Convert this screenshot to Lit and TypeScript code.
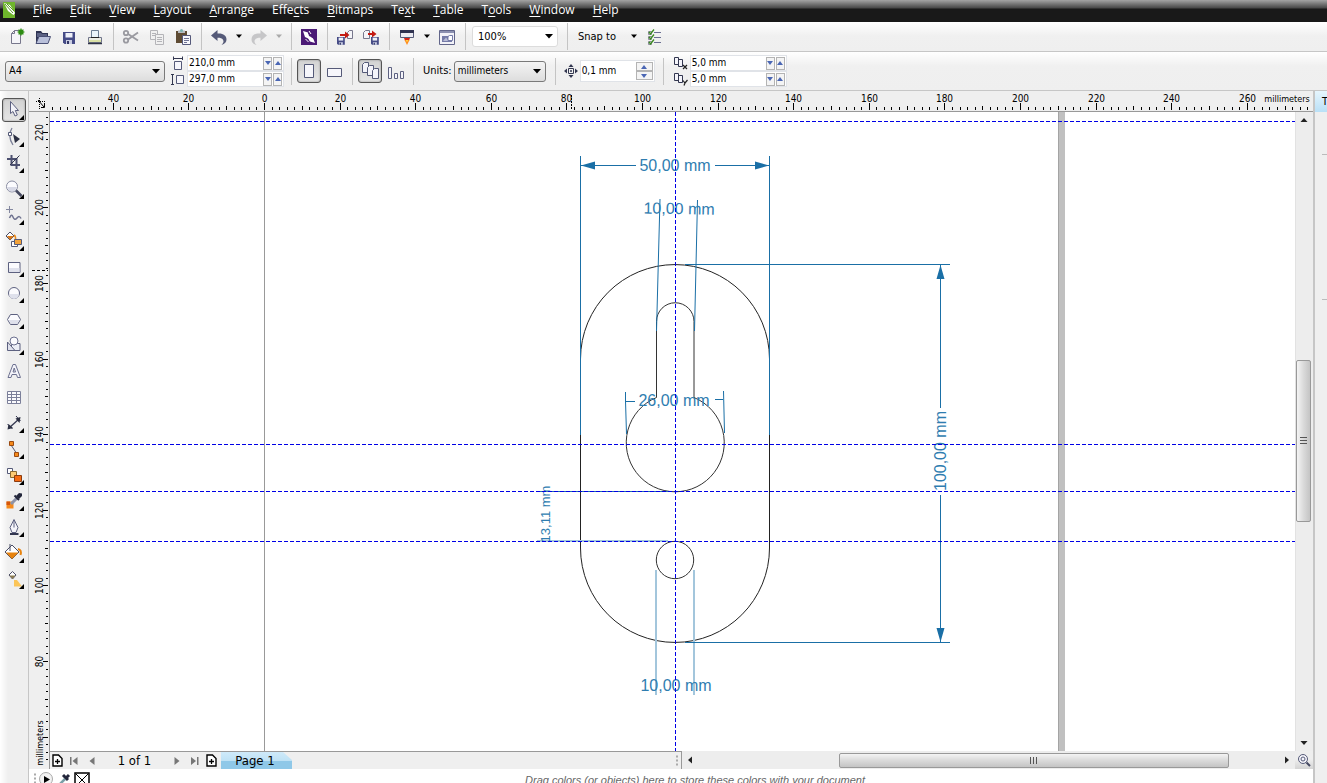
import { LitElement, html, svg, css, nothing, TemplateResult } from "lit";
import { customElement } from "lit/decorators.js";
import { classMap } from "lit/directives/class-map.js";

type Art = TemplateResult<2>;

const PX_PER_MM = 3.78;

const glyph = (art: Art, size = 16) =>
  html`<svg class="glyph" width=${size} height=${size} viewBox="0 0 ${size} ${size}" aria-hidden="true">${art}</svg>`;

/* ---------- standard toolbar icons, 18 x 18 ---------- */
const floppy = (x: number, y: number, s = 1) => svg`<g transform="translate(${x} ${y}) scale(${s})">
  <path d="M0 0H12V12H1.5L0 10.5Z" fill="#454b86"/><path d="M2.5 1H9.5V5.5H2.5Z" fill="#eef0f8"/>
  <path d="M3 8H9V12H3Z" fill="#c9cde2"/><path d="M4 9H6V12H4Z" fill="#333866"/></g>`;

const std: Record<string, Art> = {
  new: svg`<path d="M3.5 5.500L6.500 2.500H12.500V15.500H3.500Z" fill="#f4f4f8" stroke="#77778c"/><path d="M3.500 5.500H6.500V2.500" fill="none" stroke="#77778c"/>
    <circle cx="13" cy="4" r="2.600" fill="#37a018"/><path d="M13 .5V7.500M9.500 4H16.500M10.600 1.600L15.400 6.400M15.400 1.600L10.600 6.400" stroke="#2d8a12" stroke-width="1.200"/>`,
  open: svg`<path d="M2 15V3H7L8.500 5H14V8" fill="#2f3453"/><path d="M3 5H7L8 6H13V9H3Z" fill="#5c6284"/><path d="M2 15.500L5 8.500H16.500L14 15.500Z" fill="#b9c0da" stroke="#4a5075"/>`,
  save: floppy(3, 4),
  print: svg`<path d="M5.500 9V2.500H12.500V9" fill="#eaf4fa" stroke="#6d7f94"/><path d="M2.500 9.500H15.500V14.500H2.500Z" fill="#eceee6" stroke="#70758a"/><path d="M5 9.500H13" stroke="#222"/><path d="M3 12H15V14H3Z" fill="#d9e0a6"/><path d="M2 15.500H16" stroke="#2e3246" stroke-width="1.500"/>`,
  cut: svg`<g fill="none" stroke="#9a9aa0" stroke-width="1.800"><circle cx="4" cy="5" r="2.200"/><circle cx="4" cy="12.500" r="2.200"/><path d="M6 6L16 12.500M6 11.500L16 4.500"/></g>`,
  copy: svg`<g fill="#f0f0f0" stroke="#b4b4b8"><path d="M2.500 2.500H9.500V11.500H2.500Z"/><path d="M4 5.500H8M4 7.500H8" /><path d="M7.500 6.500H15.500V16.500H7.500Z"/><path d="M9 9.500H14M9 11.500H14M9 13.500H14"/></g>`,
  paste: svg`<path d="M2 3H13V15H2Z" fill="#5f4c34"/><path d="M4 2.500H11V5H4Z" fill="#b8bcc0"/><circle cx="7.500" cy="2.500" r="1.500" fill="#7ab3b0"/><path d="M8.500 7.500H16.500V16.500H8.500Z" fill="#f7f7fb" stroke="#55597a"/><path d="M10 10.500H15M10 12.500H15M10 14.500H13" stroke="#6e7294"/>`,
  undo: svg`<path d="M1 7.500L7.500 2V5.500C13 5 16.500 7.500 16.500 11.500C16.500 14 15 16 11.500 17C13.500 15 14 13.500 13 11.800C12 10.200 10.500 9.800 7.500 9.800V13Z" fill="#555a78"/>`,
  redo: svg`<path d="M17 7.500L10.500 2V5.500C5 5 1.500 7.500 1.500 11.500C1.500 14 3 16 6.500 17C4.500 15 4 13.500 5 11.800C6 10.200 7.500 9.800 10.500 9.800V13Z" fill="#c6c6c8"/>`,
  connect: svg`<path d="M1 1H17V17H1Z" fill="#4b1a76"/><path d="M3 3L8 4.500L9 8L13 10L15 15L10 13.500L8 10.500L5 9Z" fill="#fff"/><path d="M8 5L11 7M6 10L9 12.500M11.500 9L14 10.500" stroke="#4b1a76"/><path d="M9 3L11 6M5.500 11L8.500 14" stroke="#fff"/>`,
  import: svg`${floppy(1, 9, 0.65)}<path d="M11.500 10.500V4.500L13.500 2.500H16.500V10.500Z" fill="#f4f4f8" stroke="#77778c"/><path d="M4 6H9V3.500L13.500 7L9 10.500V8H4Z" fill="#c41a12"/>`,
  export: svg`<path d="M1.500 10.500V4.500L3.500 2.500H7.500V10.500Z" fill="#f4f4f8" stroke="#77778c"/><path d="M6 5H10V2.500L14.500 6L10 9.500V7H6Z" fill="#c41a12"/>${floppy(9, 9, 0.65)}`,
  launcher: svg`<path d="M2.500 2.500H15.500V9.500H2.500Z" fill="#ececf2" stroke="#555a78"/><path d="M2 2H16V5H2Z" fill="#2f3250"/><path d="M6 10H12L11 12.500H7Z" fill="#d82414"/><path d="M6.500 12H11.500L9 17Z" fill="#ff8a1c"/><path d="M8 12H10L9 14.500Z" fill="#ffe14a"/>`,
  welcome: svg`<path d="M1.500 2.500H16.500V16.500H1.500Z" fill="#f2f2f8" stroke="#62668a"/><path d="M2 3H16V5H2Z" fill="#8c90b0"/><path d="M4 8H14V14H4Z" fill="#757ba8"/><path d="M5 13L8 9.500L10 12L13 9V13Z" fill="#b9bdd6"/><path d="M10 10.500V8.500L11.500 7.500H14.500V12.500H10Z" fill="#fff" stroke="#757ba8"/>`,
  options: svg`<g stroke="#6b6f92" fill="none"><path d="M9 4.500H16M9 9.500H16M9 14.500H16"/><path d="M3.500 3.500H6.500V6.500H3.500ZM3.500 8.500H6.500V11.500H3.500ZM3.500 13.500H6.500V16.500H3.500Z" stroke="#8a8c98"/></g>
    <path d="M4 4L5.500 6L9 1.500M4 9L5.500 11L9 6.500M4 14L5.500 16L9 11.500" stroke="#3b8a20" stroke-width="1.300" fill="none"/>`,
  portrait: svg`<path d="M4.500 2.500H13.500V15.500H4.500Z" fill="#f6f6fb" stroke="#555a78"/>`,
  landscape: svg`<path d="M1.500 6.500H15.500V14.500H1.500Z" fill="#f6f6fb" stroke="#555a78"/>`,
  allPages: svg`<g fill="#f4f4fa" stroke="#555a78"><path d="M1.500 2.500L3.500 .5H7.500V10.500H1.500Z"/><path d="M6.500 5.500L8.500 3.500H12.500V13.500H6.500Z"/><path d="M11.500 8.500L13.500 6.500H17.500V16.500H11.500Z"/></g>`,
  currentPage: svg`<g fill="#f4f4fa" stroke="#5d6180"><path d="M1.500 5.500H4.500V16.500H1.500Z"/><path d="M7.500 11.500H10.500V16.500H7.500Z"/><path d="M13.500 9.500H16.500V16.500H13.500Z"/></g>`,
};

/* ---------- property bar marks ---------- */
const marks: Record<string, Art> = {
  width: svg`<path d="M3.500 5.500H10.500V13.500H3.500Z" fill="#f6f6fb" stroke="#555a78"/><path d="M2.500 .5V4M11.500 .5V4M3 2.500H11" stroke="#333750" fill="none"/>`,
  height: svg`<path d="M5.500 3.500H12.500V11.500H5.500Z" fill="#f6f6fb" stroke="#555a78"/><path d="M0 2.500H3M0 12.500H3M1.500 2V12" stroke="#333750" fill="none"/>`,
  nudge: svg`<path d="M4.500 4.500H9.500V9.500H4.500Z" fill="none" stroke="#333750"/><circle cx="7" cy="7" r="1" fill="#333750"/><path d="M7 0L9.500 3H4.500ZM7 14L4.500 11H9.500ZM0 7L3 4.500V9.500ZM14 7L11 9.500V4.500Z" fill="#333750"/>`,
  dupX: svg`<path d="M.5 1.500H4.500V8.500H.5ZM4.500 3.500H8.500V10.500H4.500Z" fill="#f4f4fa" stroke="#333750"/><path d="M9 9L13 13M13 9L9 13" stroke="#222" stroke-width="1.200"/>`,
  dupY: svg`<path d="M.5 1.500H4.500V8.500H.5ZM4.500 3.500H8.500V10.500H4.500Z" fill="#f4f4fa" stroke="#333750"/><path d="M9 8.500L11 11L13.500 8M11 11L10 13.500" stroke="#222" stroke-width="1.200" fill="none"/>`,
};

/* ---------- toolbox icons, 24 x 24 ---------- */
const flyout = svg`<path d="M22 17V22H17Z" fill="#000"/>`;
const bucket = (body: string, paint: string) => svg`<path d="M10 4L17 11L10 18L3 11Z" fill=${body} stroke="#4a4e66"/><path d="M4 11.500H16.500L10 18Z" fill=${paint}/><path d="M8 3V10" stroke="#4a4e66"/>`;

const tools: [string, Art, boolean][] = [
  ["Pick", svg`<path d="M8.500 3.500V15.500L11 13.500L13 18L15.300 17L13.300 12.500H16.500Z" fill="#f2f2f8" stroke="#5d6180"/>`, true],
  ["Shape", svg`<path d="M10 3Q5 11 11 20" fill="none" stroke="#7c8098" stroke-width="1.300"/><path d="M6.500 7.500H9.500V10.500H6.500Z" fill="#fff" stroke="#555a78"/><path d="M11 9L18 14L13 18Z" fill="#2b2f42"/>`, true],
  ["Crop", svg`<path d="M5 8H14.500V18M9.500 4V14H18" fill="none" stroke="#4c5070" stroke-width="2"/><path d="M17.500 4.500L8 14" stroke="#333750"/>`, true],
  ["Zoom", svg`<circle cx="10" cy="9.500" r="5.500" fill="#fbfbfe" stroke="#8a8da2"/><path d="M5.500 10H14.500A4.500 4.500 0 0 1 5.500 10Z" fill="#d7d9e6"/><path d="M14 13.500L19.500 19" stroke="#454960" stroke-width="2.600"/>`, true],
  ["Freehand", svg`<path d="M7.500 3V10M4 6.500H11" stroke="#8488a0"/><path d="M7.500 15Q9.500 10 11 14T15 15T19 15.500" fill="none" stroke="#6f7390" stroke-width="1.500"/>`, true],
  ["Smart Fill", svg`<path d="M8 3L12 7L8 11L4 7Z" fill="#fff" stroke="#4a4e66"/><path d="M5 7H12L8 11Z" fill="#d9791a"/><path d="M12 6Q14 7 13.500 11" stroke="#e98a1c" stroke-width="1.500" fill="none"/><path d="M9.500 12.500H15.500V17.500H9.500Z" fill="#fff" stroke="#555a78"/><path d="M12.500 10.500H19.500V15.500H12.500Z" fill="#f2a23a" stroke="#555a78"/>`, true],
  ["Rectangle", svg`<path d="M6.500 7.500H18V17.500H6.500Z" fill="#fbfbfe" stroke="#5d6180"/><path d="M7 13H17.500V17H7Z" fill="#dfe1ec"/>`, true],
  ["Ellipse", svg`<circle cx="12" cy="12" r="5.500" fill="#fbfbfe" stroke="#5d6180"/><path d="M7 13H17A5 5 0 0 1 7 13Z" fill="#dfe1ec"/>`, true],
  ["Polygon", svg`<path d="M5.500 12.500L8.500 7.500H15.500L18.500 12.500L15.500 17.500H8.500Z" fill="#fbfbfe" stroke="#5d6180"/><path d="M6.500 13H17.500L15 17H9Z" fill="#dfe1ec"/>`, true],
  ["Basic Shapes", svg`<path d="M9.500 10.500H18V17.500H9.500Z" fill="#eceef6" stroke="#5d6180"/><circle cx="12" cy="8" r="4" fill="#fbfbfe" stroke="#6d7190"/><path d="M5.500 9V17.500H13Z" fill="#dfe1ec" stroke="#5d6180"/>`, true],
  ["Text", svg`<path d="M6 18.500L11 5.500H13.500L18.500 18.500H15.500L14.500 15.500H10L9 18.500ZM11 13H13.500L12.200 9Z" fill="#f4f4fa" stroke="#6d7190"/>`, false],
  ["Table", svg`<path d="M6 6H19V18.500H6Z" fill="#fbfbfe"/><path d="M5.500 6.500H18.500V18.500H5.500ZM5.500 9.500H18.500M5.500 12.500H18.500M5.500 15.500H18.500M9.500 6.500V18.500M14.500 6.500V18.500" fill="none" stroke="#7c809a"/>`, false],
  ["Dimension", svg`<path d="M7 17L17 8" stroke="#333750" stroke-width="1.300"/><path d="M5.500 13L10.500 18M14 5L18.500 10" stroke="#333750"/><path d="M5.500 18.500L6.500 13L11 17ZM18.500 6L13.500 7.500L17.500 12Z" fill="#2b2f42"/>`, true],
  ["Connector", svg`<path d="M9 8L15 17" stroke="#555a78"/><path d="M7.500 4.500H11.500V8.500H7.500Z" fill="#f58a1c" stroke="#9a4a10"/><path d="M12.500 15.500H16.500V19.500H12.500Z" fill="#f58a1c" stroke="#9a4a10"/>`, true],
  ["Blend", svg`<path d="M5.500 5.500H10.500V10.500H5.500Z" fill="#fff" stroke="#555a78"/><path d="M8.500 8.500H14.500V14.500H8.500Z" fill="#fccb74" stroke="#8a6a30"/><path d="M12.500 12.500H19.500V18.500H12.500Z" fill="#f56a10" stroke="#8a3c10"/>`, true],
  ["Eyedropper", svg`<path d="M4.500 12.500H11.500V19.500H4.500Z" fill="#f58a1c"/><path d="M4.500 12.500H8V16H4.500Z" fill="#d4560c"/><path d="M9 15L15 9" stroke="#8d93a8" stroke-width="3"/><path d="M12.500 6.500L17 11" stroke="#23263a" stroke-width="2"/><path d="M14 7L17 4L20 4.500V7L17 10Z" fill="#23263a"/>`, true],
  ["Outline", svg`<path d="M12 4.500L16 12.500L14 17.500H10L8 12.500Z" fill="#f4f4fa" stroke="#5d6180"/><path d="M12 5.500V12.500" stroke="#5d6180"/><path d="M8 19H16.500" stroke="#333750" stroke-width="2"/>`, true],
  ["Fill", svg`${bucket("#fff", "#e8830e")}<path d="M16 8Q20 9 18.500 14" stroke="#e8830e" stroke-width="2" fill="none"/>`, true],
  ["Interactive Fill", svg`<path d="M10.500 4.500L14 8L10.500 12L7 8Z" fill="#fff" stroke="#4a4e66"/><path d="M7.500 8.500H13.500L10.500 12Z" fill="#8a7a50"/><path d="M12 13H15L20 19.500H12Z" fill="#fbc558"/>`, true],
];

const menus = ["_File", "_Edit", "_View", "_Layout", "_Arrange", "Effe_cts", "_Bitmaps", "Te_xt", "_Table", "T_ools", "_Window", "_Help"];

@customElement("app-root")
export class AppRoot extends LitElement {
  static styles = css`
    :host {
      display: grid;
      grid-template-rows: auto auto auto minmax(0, 1fr);
      height: 100vh;
      overflow: hidden;
      background: #efefef;
      color: #000;
      font: 11px/14px "DejaVu Sans Condensed", Tahoma, "DejaVu Sans", sans-serif;
    }
    *, *::before { box-sizing: border-box; }
    button, input, select { font: inherit; color: inherit; margin: 0; }
    button { border: 0; background: none; padding: 0; display: flex; align-items: center; justify-content: center; }
    svg { display: block; flex: none; }

    .menubar {
      display: flex; align-items: center; gap: 18px; height: 22px; padding: 0 0 2px 1px;
      background: linear-gradient(#a4a4a4, #474747 8px, #191919 9px, #191919);
      color: #fff; font: 12px/18px "Open Sans", "Noto Sans", sans-serif;
    }
    .menubar .logo { margin-right: -5px; }
    .menubar button { line-height: 18px; height: 20px; }
    .menubar u { text-underline-offset: 2px; }

    .toolbar { display: flex; align-items: center; border-bottom: 1px solid #c6c6c6; background: linear-gradient(#fff, #f0f0f0 14px, #efefef); }
    .standard { height: 30px; padding-left: 4px; }
    .icon { width: 26px; height: 26px; }
    .drop { width: 14px; height: 24px; }
    .sep { width: 1px; height: 27px; margin: 0 4px 0 5px; background: #c4c4c4; }
    .combo { display: grid; align-items: center; }
    .combo > * { grid-area: 1 / 1; }
    .combo svg { justify-self: end; margin-right: 4px; pointer-events: none; }
    select { appearance: none; width: 100%; height: 21px; padding: 0 16px 0 3px; border: 1px solid #7a7a7a; border-radius: 3px; background: linear-gradient(#f4f4f4, #ddd); outline: 0; }
    .zoom { width: 86px; margin: 0 4px 0 2px; }
    .zoom select { background: #fff; border-color: #dcdcdc; padding-left: 5px; }
    .snap { gap: 14px; padding: 0 3px 0 6px; height: 24px; }

    .property { height: 39px; padding-left: 5px; }
    .property .icon { width: 24px; height: 24px; margin-left: 1px; }
    .property .icon + .icon { margin-left: 2px; }
    .pressed { border: 1px solid #555; border-radius: 3px; background: linear-gradient(#d2d2d2, #e6e6e6); box-shadow: inset 0 0 2px #888; }
    .paper { width: 160px; }
    .units { width: 92px; margin-right: 4px; font-size: 10px; }
    .unitlabel { padding: 0 2px 0 5px; }
    .pair { display: grid; gap: 0; margin: 0 2px 0 6px; }
    .field { display: flex; align-items: center; gap: 2px; font-size: 10px; }
    .box { display: flex; align-items: center; gap: 1px; width: 97px; height: 16px; background: #fff; border: 1px solid #e0e3e8; padding-right: 1px; }
    .box input { flex: 1; min-width: 0; width: 0; height: 14px; border: 0; padding: 0 0 0 1px; background: none; outline: 0; }
    .step { width: 9px; height: 13px; border: 1px solid #b4b4b4; background: #f4f4f4; }
    .nudge { margin: 0 3px 0 4px; }
    .nudge .box { width: 75px; height: 22px; }
    .nudge .steps { display: grid; }
    .nudge .step { width: 17px; height: 9px; }

    .body { display: grid; grid-template-columns: 29px minmax(0, 1fr) 14px; min-height: 0; }
    .toolbox { border-right: 1px solid #c6c6c6; padding: 7px 2px 0; background: linear-gradient(90deg, #fff, #efefef 8px); }
    .tool { width: 24px; height: 26px; align-items: flex-start; border-radius: 3px; padding-top: 1px; }
    .tool.pressed { height: 24px; margin-bottom: 2px; padding: 0; }
    .tool.pressed svg { margin: -1px; }

    .doc { display: grid; grid-template-columns: 21px minmax(0, 1fr) 18px; grid-template-rows: 21px minmax(0, 1fr) 18px 14px; min-height: 0; min-width: 0; }
    .ruler-x { grid-area: 1 / 1 / 2 / 4; border-bottom: 1px solid #999; overflow: hidden; }
    .ruler-y { grid-area: 2 / 1 / 4 / 2; border-right: 1px solid #999; overflow: hidden; }
    .ruler-x svg, .ruler-y svg, .canvas svg { width: 100%; height: 100%; }
    .rulertext { font: 10px "DejaVu Sans Condensed", Tahoma, sans-serif; text-anchor: middle; }
    .rulertext.unit { font-size: 9px; }
    .canvas { grid-area: 2 / 2; background: #fff; overflow: hidden; min-height: 0; }
    .outline { fill: none; stroke: #222; }
    .slot { fill: none; stroke: #333; }
    .dim-line { stroke: #1a6fa6; fill: none; }
    .dim-soft { stroke: #a3c6dc; stroke-width: 2; fill: none; }
    .dim-head { fill: #1a6fa6; }
    .dim-text { font: 16px "Liberation Sans", Arial, sans-serif; fill: #2f7db0; text-anchor: middle; }
    .dim-text.small { font-size: 13px; }
    .guide { stroke: #0000e6; stroke-dasharray: 4 2; }

    .vscroll { grid-area: 2 / 3; display: flex; flex-direction: column; align-items: flex-start; background: #ededed; border-left: 1px solid #e2e2e2; }
    .vscroll .arrow, .hscroll .arrow { width: 16px; height: 16px; flex: none; }
    .vtrack { flex: 1; display: flex; flex-direction: column; width: 15px; }
    .vtrack::before { content: ""; flex: 233; }
    .vtrack::after { content: ""; flex: 214; }
    .vthumb { flex: 160; border: 1px solid #999; border-radius: 2px; background: linear-gradient(90deg, #f4f4f4, #dadada 50%, #c4c4c4); width: 15px; }
    .bottom { grid-area: 3 / 2; display: grid; grid-template-columns: minmax(0, 1fr) minmax(0, 613px); min-width: 0; }
    .nav { display: flex; align-items: center; border-top: 1px solid #999; border-right: 1px solid #999; font-size: 13px; }
    .nav button { width: 18px; height: 16px; flex: none; }
    .nav .add { width: 15px; }
    .count { width: 67px; text-align: center; line-height: 16px; }
    .nav .tab { width: 71px; height: 17px; margin-left: 2px; padding-right: 3px; background: linear-gradient(#cfeafa, #bfe2f5 50%, #8fc8e8 51%, #8fc8e8); clip-path: polygon(0 0, 62px 0, 100% 8px, 100% 100%, 0 100%); }
    .grip { margin-left: auto; margin-right: 2px; }
    .hscroll { display: flex; align-items: center; background: #ededed; min-width: 0; }
    .htrack { flex: 1; display: flex; height: 15px; }
    .htrack::before { content: ""; flex: 141; }
    .htrack::after { content: ""; flex: 50; }
    .hthumb { flex: 389; justify-content: center; border: 1px solid #999; border-radius: 2px; background: linear-gradient(#f4f4f4, #dadada 50%, #c4c4c4); height: 15px; }
    .navigator { grid-area: 3 / 3; background: linear-gradient(#eee 45%, #d4d4d4); }
    .palette { grid-area: 4 / 1 / 5 / 4; display: flex; align-items: flex-start; background: #fff; overflow: hidden; padding: 0 14px 0 3px; }
    .palette button { width: 18px; height: 18px; }
    .hint { flex: 1; text-align: center; color: #666; padding: 4px 0 0 0; font: italic 11px/14px "Liberation Sans", Arial, sans-serif; white-space: nowrap; }

    .docker { border-left: 2px solid #c6c6c6; display: flex; flex-direction: column; overflow: hidden; }
    .docktab { height: 21px; justify-content: flex-start; padding-left: 7px; font-size: 11px; background: linear-gradient(#e6f5fd, #b9e0f7); }
    .docker hr { width: 5px; height: 1px; margin: 42px 0 0 auto; border: 0; background: #bbb; }
    .docker hr + hr { margin-top: 144px; }
  `;

  private icon(name: string, label: string, pressed = false, disabled = false) {
    return html`<button class=${classMap({ icon: true, pressed })} aria-label=${label} title=${label} ?disabled=${disabled}>${glyph(std[name], 18)}</button>`;
  }

  private chevron(fill = "#000") {
    return html`<svg width="8" height="5" viewBox="0 0 8 5" aria-hidden="true"><path d="M1 .5H7L4 4Z" fill=${fill} /></svg>`;
  }

  private drop(label: string, fill = "#000") {
    return html`<button class="drop" aria-label=${label}>${this.chevron(fill)}</button>`;
  }

  private sep() {
    return html`<span class="sep"></span>`;
  }

  private combo(cls: string, id: string, label: string | typeof nothing, value: string) {
    return html`<span class="combo ${cls}"><select id=${id} aria-label=${label}><option>${value}</option></select>
      <svg width="10" height="5" viewBox="0 0 10 5" aria-hidden="true"><path d="M1 0H9L5 4.500Z"/></svg></span>`;
  }

  private step(up: boolean, label: string) {
    return html`<button class="step" aria-label=${label}><svg width="6" height="4" viewBox="0 0 6 4" aria-hidden="true">
      <path d=${up ? "M0 4H6L3 0Z" : "M0 0H6L3 4Z"} fill="#4a66b4"/></svg></button>`;
  }

  private field(mark: string, label: string, value: string) {
    return html`<label class="field">${glyph(marks[mark], 14)}
      <span class="box"><input aria-label=${label} .value=${value} />${this.step(false, "Decrease " + label)}${this.step(true, "Increase " + label)}</span></label>`;
  }

  private menu(text: string) {
    const i = text.indexOf("_");
    return html`<button>${text.slice(0, i)}<u>${text[i + 1]}</u>${text.slice(i + 2)}</button>`;
  }

  private rulerX() {
    const origin = 235;
    const out: Art[] = [];
    for (let mm = -56; mm <= 276; mm += 2) {
      const x = Math.round(origin + mm * PX_PER_MM) + 0.5;
      const len = mm % 20 === 0 ? 7 : mm % 10 === 0 ? 4 : 3;
      out.push(svg`<path d="M${x} ${19 - len}V19" stroke="#000"/>`);
      if (mm % 20 === 0 && mm > -50) out.push(svg`<text class="rulertext" x=${x} y="11">${Math.abs(mm)}</text>`);
    }
    return html`<svg>${out}<path d="M542.500 4V19" stroke="#000" stroke-dasharray="2 1"/>
      <g stroke="#000" fill="none"><path d="M7 10.500H16M10.500 7V18" stroke-dasharray="1 1"/><path d="M9 9L15 16M15.500 12V16.500H12"/></g>
      <text class="rulertext unit" x="1258" y="11">millimeters</text></svg>`;
  }

  private rulerY() {
    const origin = 172;
    const out: Art[] = [];
    for (let mm = 224; mm >= 54; mm -= 2) {
      const y = Math.round(origin + (180 - mm) * PX_PER_MM) - 0.5;
      const len = mm % 20 === 0 ? 5 : mm % 10 === 0 ? 3 : 2;
      out.push(svg`<path d="M${19 - len} ${y}H19" stroke="#000"/>`);
      if (mm % 20 === 0 && mm >= 80) out.push(svg`<text class="rulertext" transform="translate(14 ${y}) rotate(-90)">${mm}</text>`);
    }
    return html`<svg>${out}<path d="M3 158.500H19" stroke="#000" stroke-dasharray="3 2"/>
      <text class="rulertext unit" transform="translate(14 631) rotate(-90)">millimeters</text></svg>`;
  }

  private drawing() {
    return html`<svg role="img" aria-label="Keyhole plate drawing">
      <g transform="translate(-50 -112)">
        <path d="M264.500 112V2000" stroke="#999"/>
        <path d="M1058 112H1065V2000H1058Z" fill="#c0c0c0"/><path d="M1058.500 112V2000" stroke="#a4a4a4"/>
        <path class="outline" d="M580.500 548V359A94.500 94.500 0 0 1 769.500 359V548A94.500 94.500 0 0 1 580.500 548Z"/>
        <path class="slot" d="M656.500 397.500V321.500A18.750 18.750 0 0 1 694 321.500V397.500A49 49 0 1 1 656.500 397.500"/>
        <circle class="slot" cx="675" cy="560" r="18.700"/>

        <path class="dim-line" d="M580.500 156V435M769.500 156V435M581 165.500H636M715 165.500H769"/>
        <path class="dim-head" d="M581 165.500L595 161.500V169.500ZM769 165.500L755 161.500V169.500Z"/>
        <text class="dim-text" x="675" y="171">50,00 mm</text>

        <path class="dim-line" d="M660 199L656.500 331M697.500 200L694.500 331"/>
        <text class="dim-text" transform="translate(679 214) rotate(1)">10,00 mm</text>

        <path class="dim-line" d="M625.500 392V401L626.500 434M723.500 391L724.500 433M625 401.500H635M715 399.500H723"/>
        <text class="dim-text" x="674" y="406">26,00 mm</text>

        <path class="dim-soft" d="M537 541H668"/><path class="dim-line" d="M537 491.500H668"/>
        <text class="dim-text small" transform="translate(550 514) rotate(-90)">13,11 mm</text>

        <path class="dim-soft" d="M656 570V695M694 570V695"/>
        <text class="dim-text" x="676" y="691">10,00 mm</text>

        <path class="dim-line" d="M685 264.500H950M685 642.500H950M940.500 265V408M940.500 495V642"/>
        <path class="dim-head" d="M940.500 265L936.500 279H944.500ZM940.500 642L936.500 628H944.500Z"/>
        <text class="dim-text" transform="translate(946 451) rotate(-90)">100,00 mm</text>
      </g>
      <g class="guide"><path d="M0 9.500H4000"/><path d="M0 332.500H4000"/><path d="M0 379.500H4000"/><path d="M0 429.500H4000"/><path d="M625.500 0V2000"/></g>
    </svg>`;
  }

  private navButton(label: string, d: string) {
    return html`<button aria-label=${label}><svg width="10" height="10" viewBox="0 0 10 10" aria-hidden="true"><path d=${d} fill="#777"/></svg></button>`;
  }

  private addPage(label: string) {
    return html`<button class="add" aria-label=${label}><svg width="11" height="13" viewBox="0 0 11 13" aria-hidden="true">
      <path d="M1 1H6.500L10 4.500V12H1Z" fill="#fff" stroke="#000" stroke-width="1.400"/><path d="M5.500 5V10M3 7.500H8" stroke="#000" stroke-width="1.300"/></svg></button>`;
  }

  private arrow(label: string, d: string) {
    return html`<button class="arrow" aria-label=${label}><svg width="8" height="8" viewBox="0 0 8 8" aria-hidden="true"><path d=${d} fill="#222"/></svg></button>`;
  }

  render() {
    return html`
      <nav class="menubar">
        <svg class="logo" width="19" height="18" viewBox="0 0 19 18" aria-hidden="true"><path d="M2 1H14V17H2Z" fill="#6fb52c"/><path d="M3 2L9 4L14 12L12.500 14L7 10Z" fill="#fff"/><path d="M4 3L12 12M6 3L13 10" stroke="#5a9a24"/></svg>
        ${menus.map((m) => this.menu(m))}
      </nav>

      <div class="toolbar standard">
        ${this.icon("new", "New")}${this.icon("open", "Open")}${this.icon("save", "Save")}${this.icon("print", "Print")}${this.sep()}
        ${this.icon("cut", "Cut", false, true)}${this.icon("copy", "Copy", false, true)}${this.icon("paste", "Paste")}${this.sep()}
        ${this.icon("undo", "Undo")}${this.drop("Undo list")}${this.icon("redo", "Redo", false, true)}${this.drop("Redo list", "#aaa")}${this.sep()}
        ${this.icon("connect", "Search content")}${this.sep()}
        ${this.icon("import", "Import")}${this.icon("export", "Export")}${this.sep()}
        ${this.icon("launcher", "Application launcher")}${this.drop("Applications")}${this.icon("welcome", "Welcome screen")}${this.sep()}
        ${this.combo("zoom", "zoom", "Zoom level", "100%")}${this.sep()}
        <button class="snap">Snap to ${this.chevron()}</button>${this.icon("options", "Options")}
      </div>

      <div class="toolbar property">
        ${this.combo("paper", "paper", "Paper size", "A4")}
        <div class="pair">${this.field("width", "page width", "210,0 mm")}${this.field("height", "page height", "297,0 mm")}</div>${this.sep()}
        ${this.icon("portrait", "Portrait", true)}${this.icon("landscape", "Landscape")}${this.sep()}
        ${this.icon("allPages", "All pages", true)}${this.icon("currentPage", "Current page")}${this.sep()}
        <label class="unitlabel" for="units">Units:</label>${this.combo("units", "units", nothing, "millimeters")}${this.sep()}
        <label class="field nudge">${glyph(marks.nudge, 14)}
          <span class="box"><input aria-label="Nudge distance" .value=${"0,1 mm"} /><span class="steps">${this.step(true, "Increase nudge")}${this.step(false, "Decrease nudge")}</span></span>
        </label>${this.sep()}
        <div class="pair">${this.field("dupX", "duplicate x", "5,0 mm")}${this.field("dupY", "duplicate y", "5,0 mm")}</div>
      </div>

      <div class="body">
        <div class="toolbox">
          ${tools.map(([label, art, more], i) => html`<button class=${classMap({ tool: true, pressed: i === 0 })} aria-label=${label} title=${label}>
            <svg width="24" height="24" viewBox="0 0 24 24" aria-hidden="true">${art}${more ? flyout : nothing}</svg></button>`)}
        </div>

        <main class="doc">
          <div class="ruler-x">${this.rulerX()}</div>
          <div class="ruler-y">${this.rulerY()}</div>
          <div class="canvas">${this.drawing()}</div>
          <div class="vscroll">
            ${this.arrow("Scroll up", "M4 2L7.500 6H.5Z")}
            <div class="vtrack"><button class="vthumb" aria-label="Vertical scroll"><svg width="7" height="7" viewBox="0 0 7 7"><path d="M0 .5H7M0 3.500H7M0 6.500H7" stroke="#555"/></svg></button></div>
            ${this.arrow("Scroll down", "M4 6L7.500 2H.5Z")}
          </div>
          <div class="bottom">
            <div class="nav">
              ${this.addPage("Add page before")}
              ${this.navButton("First page", "M1 1H2.500V9H1ZM8.500 1V9L3.500 5Z")}${this.navButton("Previous page", "M7.500 1V9L2.500 5Z")}
              <span class="count">1 of 1</span>
              ${this.navButton("Next page", "M2.500 1V9L7.500 5Z")}${this.navButton("Last page", "M1 1V9L6 5ZM7 1H8.500V9H7Z")}
              ${this.addPage("Add page after")}
              <button class="tab">Page 1</button>
              <svg class="grip" width="3" height="11" viewBox="0 0 3 11" aria-hidden="true"><path d="M0 1.500H2M0 5.500H2M0 9.500H2" stroke="#aaa" stroke-width="2"/></svg>
            </div>
            <div class="hscroll">
              ${this.arrow("Scroll left", "M2 4L6 .5V7.500Z")}
              <div class="htrack"><button class="hthumb" aria-label="Horizontal scroll"><svg width="7" height="7" viewBox="0 0 7 7"><path d="M.5 0V7M3.500 0V7M6.500 0V7" stroke="#555"/></svg></button></div>
              ${this.arrow("Scroll right", "M6 4L2 .5V7.500Z")}
            </div>
          </div>
          <button class="navigator" aria-label="Navigator"><svg width="14" height="14" viewBox="0 0 14 14"><circle cx="6" cy="6" r="4.500" fill="#f4f4fa" stroke="#555a78"/><circle cx="6" cy="6" r="2" fill="none" stroke="#555a78"/><path d="M9.500 9.500L13 13" stroke="#444862" stroke-width="2"/></svg></button>
          <div class="palette">
            <svg width="5" height="14" viewBox="0 0 5 14" aria-hidden="true"><path d="M2 5.500H4M2 9.500H4M2 13.500H4" stroke="#aaa" stroke-width="2"/></svg>
            <button aria-label="Palette menu"><svg width="16" height="16" viewBox="0 0 16 16"><circle cx="8" cy="9" r="6.500" fill="#f2f2f2" stroke="#aaa"/><path d="M6 6L12 9.500L6 13Z"/></svg></button>
            <button aria-label="Sample color"><svg width="14" height="16" viewBox="0 0 14 16"><path d="M2 15L8 9" stroke="#7aa0a8" stroke-width="2.500"/><path d="M6 5L11 10M8.500 8.500L12 5" stroke="#23263a" stroke-width="3"/></svg></button>
            <button aria-label="No color"><svg width="16" height="18" viewBox="0 0 16 18"><path d="M1 4H15V18H1Z" fill="#fff" stroke="#000" stroke-width="1.500"/><path d="M2 5L14 17M14 5L2 17" stroke="#000"/></svg></button>
            <span class="hint">Drag colors (or objects) here to store these colors with your document</span>
          </div>
        </main>

        <aside class="docker"><button class="docktab">T</button><hr /><hr /></aside>
      </div>
    `;
  }
}
